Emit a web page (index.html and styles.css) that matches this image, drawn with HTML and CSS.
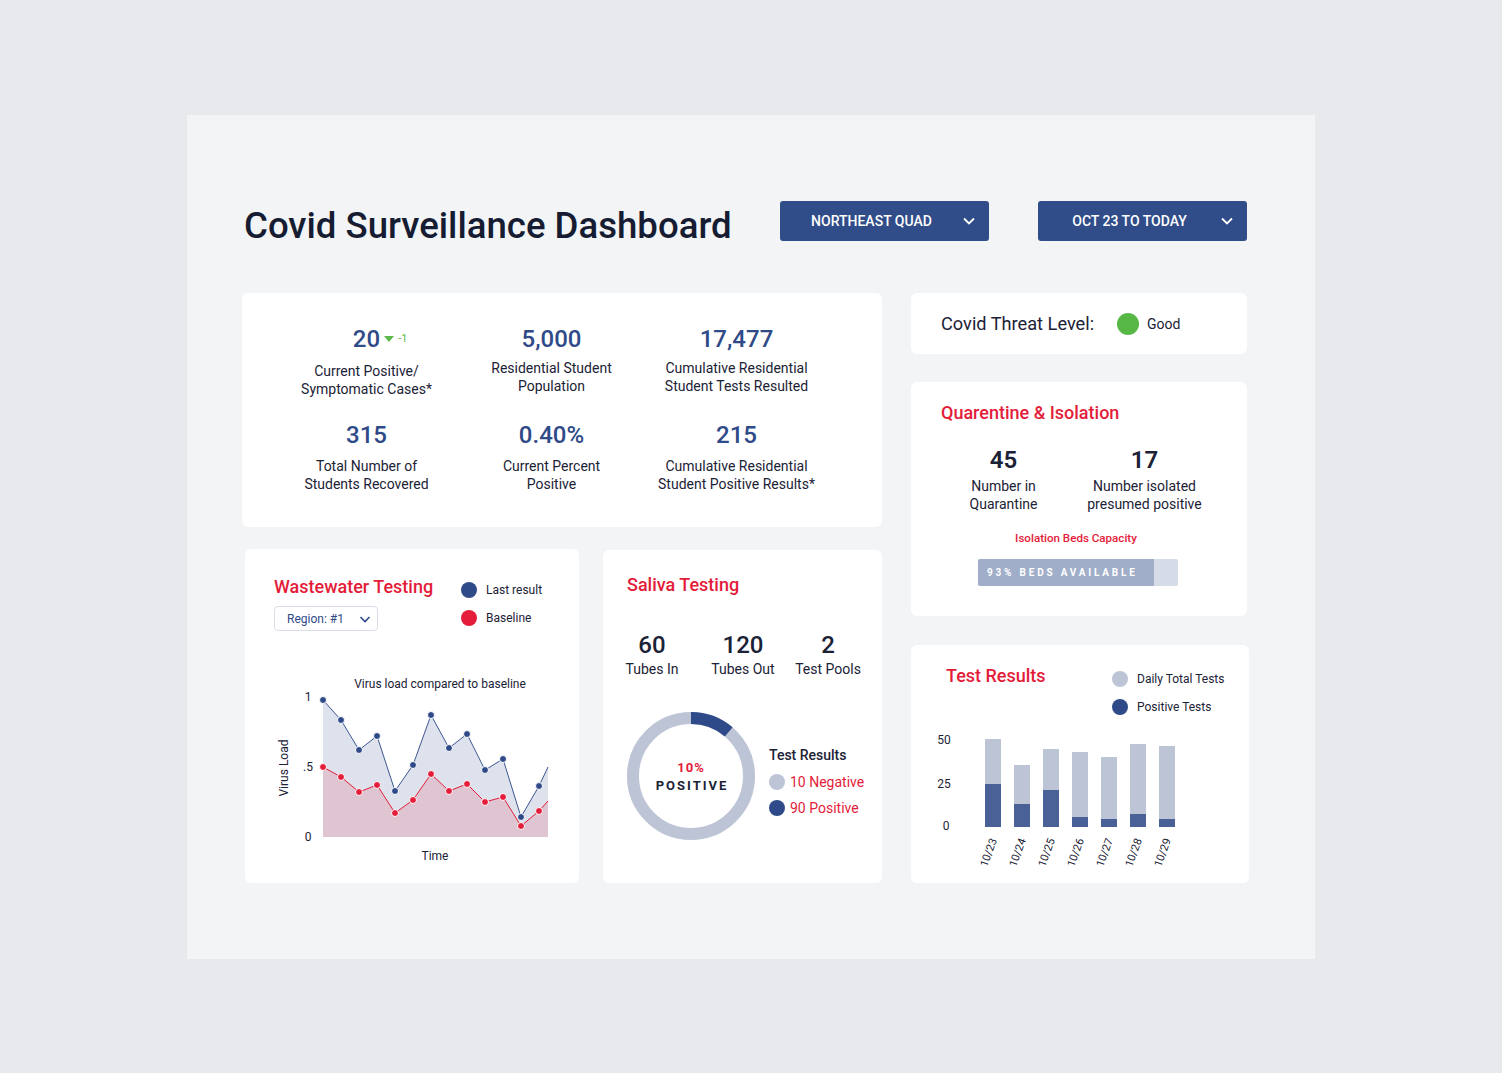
FILE: index.html
```html
<!DOCTYPE html>
<html lang="en">
<head>
<meta charset="utf-8">
<title>Covid Surveillance Dashboard</title>
<link rel="stylesheet" href="styles.css">
</head>
<body>
<div class="panel">
  <header class="top">
    <h1 class="title">Covid Surveillance Dashboard</h1>
    <div class="select">
      <span class="select-text">NORTHEAST QUAD</span>
      <svg class="chev" width="12" height="8" viewBox="0 0 12 8"><path d="M1 1.5l5 5 5-5" fill="none" stroke="#fff" stroke-width="1.8"/></svg>
    </div>
    <div class="select select-date">
      <span class="select-text">OCT 23 TO TODAY</span>
      <svg class="chev" width="12" height="8" viewBox="0 0 12 8"><path d="M1 1.5l5 5 5-5" fill="none" stroke="#fff" stroke-width="1.8"/></svg>
    </div>
  </header>

  <div class="grid">
    <div class="left">
      <section class="card stats">
        <div class="stat">
          <div class="stat-num has-badge">20<span class="badge"><span class="tri"></span>-1</span></div>
          <div class="stat-label shift">Current Positive/<br>Symptomatic Cases*</div>
        </div>
        <div class="stat">
          <div class="stat-num">5,000</div>
          <div class="stat-label">Residential Student<br>Population</div>
        </div>
        <div class="stat">
          <div class="stat-num">17,477</div>
          <div class="stat-label">Cumulative Residential<br>Student Tests Resulted</div>
        </div>
        <div class="stat row2">
          <div class="stat-num">315</div>
          <div class="stat-label">Total Number of<br>Students Recovered</div>
        </div>
        <div class="stat row2">
          <div class="stat-num">0.40%</div>
          <div class="stat-label">Current Percent<br>Positive</div>
        </div>
        <div class="stat row2">
          <div class="stat-num">215</div>
          <div class="stat-label">Cumulative Residential<br>Student Positive Results*</div>
        </div>
      </section>

      <div class="row">
        <section class="card waste">
          <div class="waste-head">
            <div class="waste-left">
              <h2 class="card-title">Wastewater Testing</h2>
              <div class="region">
                <span>Region: #1</span>
                <svg width="12" height="8" viewBox="0 0 12 8"><path d="M1.5 2l4.5 4.5 4.5-4.5" fill="none" stroke="#2f4a88" stroke-width="1.6"/></svg>
              </div>
            </div>
            <div class="legend">
              <div class="legend-row"><span class="dot dot-navy"></span>Last result</div>
              <div class="legend-row"><span class="dot dot-red"></span>Baseline</div>
            </div>
          </div>
          <svg class="waste-chart" width="334" height="214" viewBox="245 669 334 214">
            <text x="440" y="688" class="ax" text-anchor="middle">Virus load compared to baseline</text>
            <text x="308" y="701" class="ax" text-anchor="middle">1</text>
            <text x="308" y="771" class="ax" text-anchor="middle">.5</text>
            <text x="308" y="841" class="ax" text-anchor="middle">0</text>
            <text x="288" y="768" class="ax" text-anchor="middle" transform="rotate(-90 288 768)">Virus Load</text>
            <text x="435" y="860" class="ax" text-anchor="middle">Time</text>
            <polygon fill="#dde2ed" points="323,700 341,720 359,750 377,736 395,791 413,765 431,715 449,748 467,734 485,770 503,759 521,817 539,786 548,767 548,837 323,837"/>
            <polygon fill="#dfc4d1" points="323,767 341,777 359,792 377,785 395,813 413,800 431,774 449,791 467,784 485,802 503,797 521,826 539,811 548,801 548,837 323,837"/>
            <polyline fill="none" stroke="#3d5591" stroke-width="1" points="323,700 341,720 359,750 377,736 395,791 413,765 431,715 449,748 467,734 485,770 503,759 521,817 539,786 548,767"/>
            <polyline fill="none" stroke="#e41d3a" stroke-width="1" points="323,767 341,777 359,792 377,785 395,813 413,800 431,774 449,791 467,784 485,802 503,797 521,826 539,811 548,801"/>
            <g fill="#2f4a88" stroke="#fff" stroke-width="1">
              <circle cx="323" cy="700" r="3.5"/><circle cx="341" cy="720" r="3.5"/><circle cx="359" cy="750" r="3.5"/><circle cx="377" cy="736" r="3.5"/><circle cx="395" cy="791" r="3.5"/><circle cx="413" cy="765" r="3.5"/><circle cx="431" cy="715" r="3.5"/><circle cx="449" cy="748" r="3.5"/><circle cx="467" cy="734" r="3.5"/><circle cx="485" cy="770" r="3.5"/><circle cx="503" cy="759" r="3.5"/><circle cx="521" cy="817" r="3.5"/><circle cx="539" cy="786" r="3.5"/>
            </g>
            <g fill="#e41d3a" stroke="#fff" stroke-width="1">
              <circle cx="323" cy="767" r="3.5"/><circle cx="341" cy="777" r="3.5"/><circle cx="359" cy="792" r="3.5"/><circle cx="377" cy="785" r="3.5"/><circle cx="395" cy="813" r="3.5"/><circle cx="413" cy="800" r="3.5"/><circle cx="431" cy="774" r="3.5"/><circle cx="449" cy="791" r="3.5"/><circle cx="467" cy="784" r="3.5"/><circle cx="485" cy="802" r="3.5"/><circle cx="503" cy="797" r="3.5"/><circle cx="521" cy="826" r="3.5"/><circle cx="539" cy="811" r="3.5"/>
            </g>
          </svg>
        </section>

        <section class="card saliva">
          <h2 class="card-title saliva-title">Saliva Testing</h2>
          <div class="tubes">
            <div class="tube"><div class="tube-num">60</div><div class="tube-label">Tubes In</div></div>
            <div class="tube"><div class="tube-num">120</div><div class="tube-label">Tubes Out</div></div>
            <div class="tube"><div class="tube-num">2</div><div class="tube-label">Test Pools</div></div>
          </div>
          <div class="donut-row">
            <div class="donut">
              <svg width="128" height="128" viewBox="0 0 128 128">
                <circle cx="64" cy="64" r="58" fill="none" stroke="#bcc4d6" stroke-width="12"/>
                <circle cx="64" cy="64" r="58" fill="none" stroke="#2f4a88" stroke-width="12" stroke-dasharray="41 400" transform="rotate(-90 64 64)"/>
              </svg>
              <div class="donut-text">
                <span class="donut-pct">10%</span>
                <span class="donut-lbl">POSITIVE</span>
              </div>
            </div>
            <div class="donut-legend">
              <div class="dl-title">Test Results</div>
              <div class="dl-row"><span class="dot dot-gray"></span>10 Negative</div>
              <div class="dl-row"><span class="dot dot-navy"></span>90 Positive</div>
            </div>
          </div>
        </section>
      </div>
    </div>

    <div class="right">
      <section class="card threat">
        <span class="threat-label">Covid Threat Level:</span>
        <span class="threat-dot"></span>
        <span class="threat-val">Good</span>
      </section>

      <section class="card quar">
        <h2 class="card-title quar-title">Quarentine &amp; Isolation</h2>
        <div class="quar-grid">
          <div class="q"><div class="q-num">45</div><div class="q-label">Number in<br>Quarantine</div></div>
          <div class="q"><div class="q-num">17</div><div class="q-label">Number isolated<br>presumed positive</div></div>
        </div>
        <div class="beds-cap">Isolation Beds Capacity</div>
        <div class="beds-bar"><div class="beds-fill">93% BEDS AVAILABLE</div></div>
      </section>

      <section class="card tests">
        <div class="tests-head">
          <h2 class="card-title">Test Results</h2>
          <div class="legend tests-legend">
            <div class="legend-row"><span class="dot dot-gray"></span>Daily Total Tests</div>
            <div class="legend-row"><span class="dot dot-navy"></span>Positive Tests</div>
          </div>
        </div>
        <svg class="tests-chart" width="338" height="150" viewBox="911 725 338 150">
          <text x="944" y="744" class="ax" text-anchor="middle">50</text>
          <text x="944" y="788" class="ax" text-anchor="middle">25</text>
          <text x="946" y="830" class="ax" text-anchor="middle">0</text>
          <g fill="#bcc4d6">
            <rect x="985" y="739" width="16" height="88"/>
            <rect x="1014" y="765" width="16" height="62"/>
            <rect x="1043" y="749" width="16" height="78"/>
            <rect x="1072" y="752" width="16" height="75"/>
            <rect x="1101" y="757" width="16" height="70"/>
            <rect x="1130" y="744" width="16" height="83"/>
            <rect x="1159" y="746" width="16" height="81"/>
          </g>
          <g fill="#4a6198">
            <rect x="985" y="784" width="16" height="43"/>
            <rect x="1014" y="804" width="16" height="23"/>
            <rect x="1043" y="790" width="16" height="37"/>
            <rect x="1072" y="817" width="16" height="10"/>
            <rect x="1101" y="819" width="16" height="8"/>
            <rect x="1130" y="814" width="16" height="13"/>
            <rect x="1159" y="819" width="16" height="8"/>
          </g>
          <g class="xl" text-anchor="end">
            <text x="997" y="840" transform="rotate(-70 997 840)">10/23</text>
            <text x="1026" y="840" transform="rotate(-70 1026 840)">10/24</text>
            <text x="1055" y="840" transform="rotate(-70 1055 840)">10/25</text>
            <text x="1084" y="840" transform="rotate(-70 1084 840)">10/26</text>
            <text x="1113" y="840" transform="rotate(-70 1113 840)">10/27</text>
            <text x="1142" y="840" transform="rotate(-70 1142 840)">10/28</text>
            <text x="1171" y="840" transform="rotate(-70 1171 840)">10/29</text>
          </g>
        </svg>
      </section>
    </div>
  </div>
</div>
</body>
</html>
```

FILE: styles.css
```css
* { box-sizing: border-box; }

html, body {
  margin: 0;
  padding: 0;
}

body {
  background: #e8e9ed;
  font-family: Roboto, "Noto Sans", "Liberation Sans", sans-serif;
  color: #1b2236;
  width: 1502px;
  height: 1073px;
  overflow: hidden;
}

.panel {
  margin: 115px 0 0 187px;
  width: 1128px;
  height: 844px;
  background: #f3f4f6;
  padding: 86px 0 0 55px;
}

/* header */
.top {
  display: flex;
  align-items: center;
  height: 40px;
}

.title {
  margin: 8px 0 0 2px;
  width: 536px;
  flex: none;
  font-size: 36.6px;
  font-weight: 500;
  color: #161c31;
  letter-spacing: 0;
}

.select {
  width: 209px;
  height: 40px;
  flex: none;
  background: #304c89;
  border-radius: 3px;
  display: flex;
  align-items: center;
  padding: 0 14px 0 0;
  color: #fff;
  font-size: 14px;
  font-weight: 500;
}

.select-date { margin-left: 49px; }

.select-text {
  flex: 1;
  text-align: center;
}

.chev { display: block; }

/* grid */
.grid {
  display: flex;
  gap: 29px;
  margin-top: 52px;
}

.left { width: 640px; flex: none; }
.right { width: 338px; flex: none; display: flex; flex-direction: column; }

.card {
  background: #fff;
  border-radius: 6px;
}

.card-title {
  margin: 0;
  font-size: 18px;
  line-height: 22px;
  font-weight: 500;
  color: #e31c3a;
}

/* stats */
.stats {
  height: 234px;
  padding: 31px 0 0 32px;
  display: grid;
  grid-template-columns: 185px 185px 185px;
  grid-auto-rows: max-content;
  row-gap: 22px;
}

.stat {
  display: flex;
  flex-direction: column;
  align-items: center;
}

.stat-num {
  font-size: 24px;
  line-height: 30px;
  font-weight: 500;
  color: #2f4a88;
}

.has-badge { position: relative; }

.badge {
  position: absolute;
  left: 100%;
  top: 9px;
  margin-left: 4px;
  display: flex;
  align-items: center;
  gap: 4px;
  font-size: 11px;
  line-height: 12px;
  font-weight: 400;
  color: #5cb84a;
  white-space: nowrap;
}

.tri {
  width: 0;
  height: 0;
  border-left: 5.5px solid transparent;
  border-right: 5.5px solid transparent;
  border-top: 6px solid #5cb84a;
}

.stat-label {
  margin-top: 5px;
  font-size: 14px;
  line-height: 18px;
  text-align: center;
  color: #1b2236;
  white-space: nowrap;
}

.stat-label.shift { margin-top: 8px; }
.row2 .stat-label { margin-top: 7px; }

/* row of lower cards */
.row {
  display: flex;
  gap: 24px;
  margin-top: 22px;
  align-items: flex-start;
}

.waste {
  margin-left: 3px;
  width: 334px;
  height: 334px;
  overflow: hidden;
}

.waste-head {
  height: 120px;
  padding: 27px 0 0 29px;
  display: flex;
}

.waste-left { width: 187px; }

.region {
  margin-top: 8px;
  width: 104px;
  height: 25px;
  border: 1px solid #d9dde6;
  border-radius: 4px;
  display: flex;
  align-items: center;
  justify-content: space-between;
  padding: 0 6px 0 12px;
  font-size: 12px;
  color: #2f4a88;
}

.region svg { display: block; }

.legend {
  display: flex;
  flex-direction: column;
  padding-top: 0;
}

.legend-row {
  height: 28px;
  display: flex;
  align-items: center;
  gap: 9px;
  font-size: 12px;
  color: #1b2236;
}

.dot {
  width: 16px;
  height: 16px;
  border-radius: 50%;
  flex: none;
  display: inline-block;
}

.dot-navy { background: #2f4a88; }
.dot-red { background: #e41d3a; }
.dot-gray { background: #bcc4d6; }

.waste-chart, .tests-chart { display: block; }

.ax {
  font-family: Roboto, "Noto Sans", sans-serif;
  font-size: 12px;
  fill: #1b2236;
}

.xl text {
  font-family: Roboto, "Noto Sans", sans-serif;
  font-size: 11px;
  fill: #1b2236;
}

/* saliva */
.saliva {
  width: 279px;
  height: 333px;
  margin-top: 1px;
  padding-top: 24px;
}

.saliva-title { padding-left: 24px; }

.tubes {
  margin-top: 35px;
  padding-left: 19px;
  display: grid;
  grid-template-columns: 60px 122px 48px;
}

.tube {
  display: flex;
  flex-direction: column;
  align-items: center;
  white-space: nowrap;
}

.tube-num {
  font-size: 24px;
  line-height: 28px;
  font-weight: 500;
  color: #1b2236;
}

.tube-label {
  margin-top: 1px;
  font-size: 14px;
  line-height: 18px;
  color: #1b2236;
}

.donut-row {
  margin-top: 34px;
  padding-left: 24px;
  display: flex;
  gap: 14px;
}

.donut {
  width: 128px;
  height: 128px;
  display: grid;
  flex: none;
}

.donut svg, .donut-text {
  grid-area: 1 / 1;
}

.donut svg { display: block; }

.donut-text {
  display: flex;
  flex-direction: column;
  align-items: center;
  justify-content: center;
  padding-top: 1px;
  font-size: 13px;
  line-height: 18px;
  font-weight: 700;
}

.donut-pct { color: #e31c3a; letter-spacing: 1px; }
.donut-lbl { color: #1b2236; letter-spacing: 2px; margin-left: 2px; }

.donut-legend {
  padding-top: 34px;
}

.dl-title {
  font-size: 14px;
  line-height: 18px;
  font-weight: 500;
  color: #1b2236;
}

.dl-row {
  margin-top: 7px;
  height: 21px;
  display: flex;
  align-items: center;
  gap: 5px;
  font-size: 14px;
  color: #e31c3a;
}

.dl-row + .dl-row { margin-top: 5px; }

/* threat */
.threat {
  width: 336px;
  height: 61px;
  display: flex;
  align-items: center;
  padding: 0 30px;
}

.threat-label {
  font-size: 18.2px;
  color: #1b2236;
}

.threat-dot {
  width: 22px;
  height: 22px;
  border-radius: 50%;
  background: #56b747;
  margin-left: 23px;
}

.threat-val {
  margin-left: 8px;
  font-size: 14px;
  color: #1b2236;
}

/* quarantine */
.quar {
  width: 336px;
  height: 234px;
  margin-top: 28px;
  padding-top: 20px;
  display: flex;
  flex-direction: column;
}

.quar-title { padding-left: 30px; }

.quar-grid {
  margin-top: 21px;
  padding-left: 22px;
  display: grid;
  grid-template-columns: 141px 141px;
}

.q {
  display: flex;
  flex-direction: column;
  align-items: center;
  white-space: nowrap;
}

.q-num {
  font-size: 24px;
  line-height: 30px;
  font-weight: 600;
  color: #1b2236;
}

.q-label {
  margin-top: 2px;
  font-size: 14px;
  line-height: 18px;
  text-align: center;
  color: #1b2236;
}

.beds-cap {
  margin-top: 18px;
  padding-right: 6px;
  text-align: center;
  font-size: 11.6px;
  line-height: 14px;
  font-weight: 500;
  color: #e31c3a;
}

.beds-bar {
  margin: 14px 0 0 67px;
  width: 200px;
  height: 27px;
  background: #d5dbe7;
  border-radius: 2px;
  overflow: hidden;
}

.beds-fill {
  width: 176px;
  height: 27px;
  background: #a0aec9;
  padding-left: 9px;
  line-height: 27px;
  font-size: 10px;
  font-weight: 700;
  letter-spacing: 2.8px;
  color: #fff;
  white-space: nowrap;
}

/* test results */
.tests {
  width: 338px;
  height: 238px;
  margin-top: 29px;
  overflow: hidden;
}

.tests-head {
  height: 80px;
  padding: 20px 0 0 35px;
  display: flex;
}

.tests-head .card-title { width: 166px; }
```
